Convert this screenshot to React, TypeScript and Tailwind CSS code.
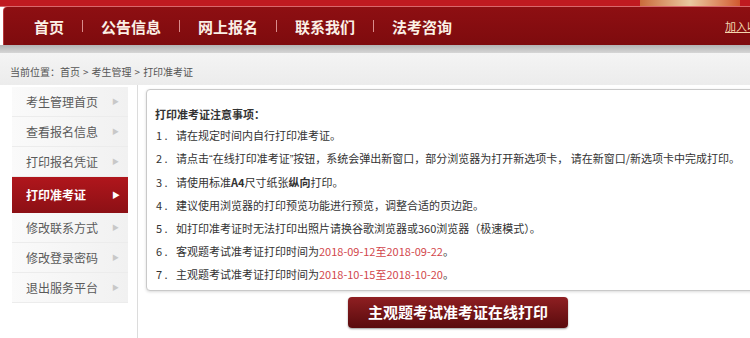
import React from 'react'

const cjk = { fontFamily: '"Noto Sans CJK SC", "Noto Sans", sans-serif' }

const navItems = ['首页', '公告信息', '网上报名', '联系我们', '法考咨询']

const menu = [
  { label: '考生管理首页' },
  { label: '查看报名信息' },
  { label: '打印报名凭证' },
  { label: '打印准考证', active: true },
  { label: '修改联系方式' },
  { label: '修改登录密码' },
  { label: '退出服务平台' },
]

function Red({ children }: { children: React.ReactNode }) {
  return <span className="text-[#d2474c]">{children}</span>
}

// numbered prefix like "1 ." with the wide spacing of the original page
function Num({ n }: { n: number }) {
  return <span className="inline-block w-[22px] pl-[2px]">{n} .</span>
}

function Q({ children }: { children: React.ReactNode }) {
  return <span className="font-['Liberation_Sans',sans-serif]">{children}</span>
}

export default function App() {
  return (
    <div className="h-[338px] w-[750px] overflow-hidden bg-white" style={cjk}>
      <div className="w-[790px]">
        {/* top strip */}
        <div className="flex h-[7px] border-b border-[#d9686b] bg-[#c01a20]">
          <div className="ml-[640px] h-full w-[100px] bg-gradient-to-r from-[#c96a3a] via-[#e8c9a0] to-[#d0582e]" />
        </div>

        {/* nav */}
        <div className="ml-[3px] flex h-[38px] items-center rounded-tl-[4px] border-l border-[#b8383c] bg-gradient-to-b from-[#8e0f12] to-[#7e0b0e]">
          <div className="ml-[30px] flex items-center">
            {navItems.map((n, i) => (
              <React.Fragment key={n}>
                {i > 0 && <span className="mx-[18px] h-[12px] w-px bg-[#d98c8c]" />}
                <span className="text-[15px] font-bold leading-none text-[#fbf0e6]">{n}</span>
              </React.Fragment>
            ))}
          </div>
          <span className="ml-auto mr-[21px] text-[11px] text-[#f3d6ad] underline">加入收藏</span>
        </div>

        {/* gray bar */}
        <div className="h-[8px] bg-gradient-to-b from-[#b3b3b3] to-[#d6d6d6]" />

        {/* breadcrumb */}
        <div className="flex h-[32px] items-end gap-[3px] bg-gradient-to-b from-[#f4f4f4] to-[#ececec] pb-[6px] pl-[10px] text-[10px] text-[#555]">
          <span>当前位置：首页</span>
          <span>&gt;</span>
          <span>考生管理</span>
          <span>&gt;</span>
          <span>打印准考证</span>
        </div>

        <div className="flex">
          {/* sidebar */}
          <div className="h-[260px] w-[138px] border-r border-[#dcdcdc] pl-[12px] pr-[9px] pt-[2px]">
            {menu.map((m) =>
              m.active ? (
                <div
                  key={m.label}
                  className="flex h-[36px] items-center justify-between bg-gradient-to-b from-[#b0161c] to-[#8c1015] pl-[14px] pr-[8px] text-[12px] font-bold text-white"
                >
                  <span>{m.label}</span>
                  <span className="text-[8px]">▶</span>
                </div>
              ) : (
                <div
                  key={m.label}
                  className="flex h-[30px] items-center justify-between border-b border-[#ececec] bg-gradient-to-r from-[#fafafa] to-[#f1f1f1] pl-[14px] pr-[9px] text-[12px] text-[#5a5a5a]"
                >
                  <span>{m.label}</span>
                  <span className="text-[7px] text-[#c8c8c8]">▶</span>
                </div>
              )
            )}
          </div>

          {/* content */}
          <div className="ml-[8px] flex-1 pt-[4px]">
            <div className="rounded-[4px] border border-[#c9c9c9] bg-white pb-[4px] pl-[7px] pt-[14px] text-[11px] text-[#333] shadow-[0_1px_3px_rgba(0,0,0,0.15)]">
              <div className="h-[20px] pl-[1px] font-bold leading-[20px]">打印准考证注意事项：</div>
              <div className="leading-[23px]">
                <div>
                  <Num n={1} />请在规定时间内自行打印准考证。
                </div>
                <div>
                  <Num n={2} />请点击<Q>“</Q>在线打印准考证<Q>”</Q>按钮，系统会弹出新窗口，部分浏览器为打开新选项卡， 请在新窗口/新选项卡中完成打印。
                </div>
                <div>
                  <Num n={3} />请使用标准<b>A4</b>尺寸纸张<b>纵向</b>打印。
                </div>
                <div>
                  <Num n={4} />建议使用浏览器的打印预览功能进行预览，调整合适的页边距。
                </div>
                <div>
                  <Num n={5} />如打印准考证时无法打印出照片请换谷歌浏览器或360浏览器（极速模式）。
                </div>
                <div>
                  <Num n={6} />客观题考试准考证打印时间为<Red>2018-09-12至2018-09-22</Red>。
                </div>
                <div>
                  <Num n={7} />主观题考试准考证打印时间为<Red>2018-10-15至2018-10-20</Red>。
                </div>
              </div>
            </div>

            <button className="ml-[202px] mt-[6px] flex h-[31px] w-[220px] items-center justify-center rounded-[4px] bg-gradient-to-b from-[#8f1f22] to-[#5a0b0d] text-[15px] font-bold text-white shadow-[0_1px_2px_rgba(0,0,0,0.4)]">
              主观题考试准考证在线打印
            </button>
          </div>
        </div>
      </div>
    </div>
  )
}
